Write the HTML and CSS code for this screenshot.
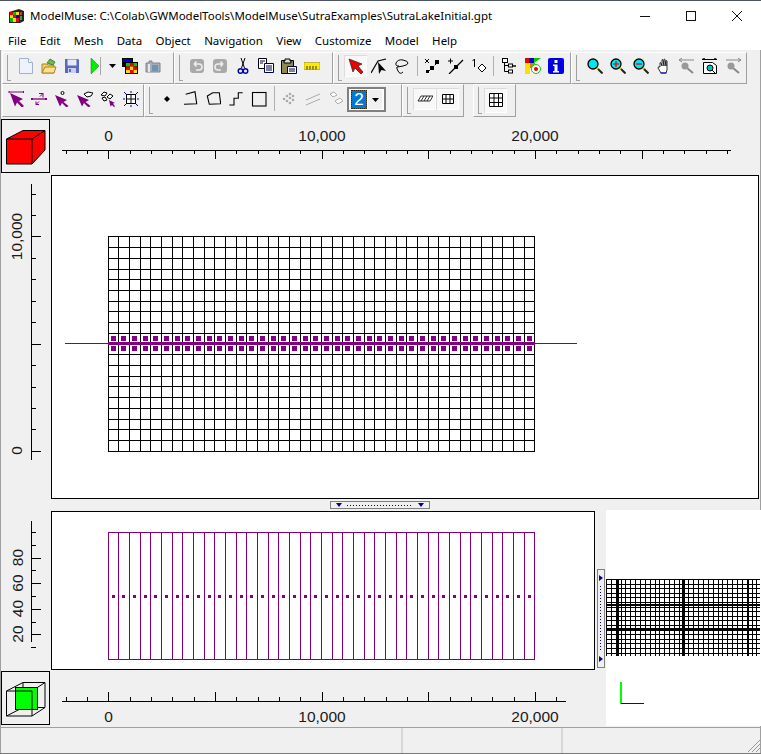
FILE: index.html
```html
<!DOCTYPE html>
<html lang="en">
<head>
  <meta charset="UTF-8">
  <title>ModelMuse</title>
  <link rel="stylesheet" href="styles.css">
</head>
<body>
  <div class="window">
    <div class="titlebar">
      <svg class="app-icon" viewBox="0 0 15 14" width="15" height="14">
        <path d="M0 3l10-3 5 2v10l-4 2H0z" fill="#222"/>
        <rect x="1" y="3" width="3" height="3" fill="#e00"/><rect x="4" y="3" width="3" height="3" fill="#0b0"/><rect x="7" y="3" width="3" height="3" fill="#fd0"/>
        <rect x="1" y="6" width="3" height="3" fill="#fd0"/><rect x="4" y="6" width="3" height="3" fill="#e00"/><rect x="7" y="6" width="3" height="3" fill="#00c"/>
        <rect x="1" y="9" width="3" height="4" fill="#0b0"/><rect x="4" y="9" width="3" height="4" fill="#fd0"/><rect x="7" y="9" width="3" height="4" fill="#e00"/>
        <rect x="11" y="3" width="2" height="3" fill="#c33"/><rect x="11" y="7" width="2" height="4" fill="#3a3"/>
      </svg>
      <span class="title-text">ModelMuse: C:\Colab\GWModelTools\ModelMuse\SutraExamples\SutraLakeInitial.gpt</span>
      <div class="caption-btns">
        <svg width="46" height="30" viewBox="0 0 46 30"><path d="M18 15.500h10" stroke="#111" fill="none"/></svg>
        <svg width="46" height="30" viewBox="0 0 46 30"><rect x="18.500" y="10.500" width="9" height="9" stroke="#111" fill="none"/></svg>
        <svg width="46" height="30" viewBox="0 0 46 30"><path d="M18 10l10 10M28 10l-10 10" stroke="#111" fill="none"/></svg>
      </div>
    </div>

    <div class="menubar">
      <span>File</span><span>Edit</span><span>Mesh</span><span>Data</span><span>Object</span><span>Navigation</span><span>View</span><span>Customize</span><span>Model</span><span>Help</span>
    </div>

    <div class="toolrow">
      <div class="band band-file">
        <button class="tb"><svg viewBox="0 0 16 16"><path d="M1.500.5h9l4 4v11h-13z" fill="#eef3fb" stroke="#9fb2d4"/><path d="M10.500.5v4h4" fill="#fff" stroke="#9fb2d4"/></svg></button>
        <button class="tb"><svg viewBox="0 0 16 16"><path d="M1 15V6h5l1 1h6v8z" fill="#f6cf5f" stroke="#a8842a"/><path d="M1 15l3-6h11l-2 6z" fill="#fbe08a" stroke="#a8842a"/><path d="M6 5l3-4 5 3-2 3z" fill="#6dbb4e" stroke="#3f8a2f"/></svg></button>
        <button class="tb"><svg viewBox="0 0 16 16"><path d="M1 1h13l1 1v13H1z" fill="#5a68c0"/><rect x="3.500" y="1.500" width="9" height="6" fill="#e5e8f5"/><rect x="4" y="10" width="8" height="5" fill="#c9cfe8"/><rect x="5" y="11" width="2" height="3" fill="#5a68c0"/></svg></button>
        <button class="tb"><svg viewBox="0 0 16 16"><path d="M4 0l8 8-8 8z" fill="#00ee00" stroke="#0a8a0a" stroke-width=".5"/></svg></button>
        <i class="tick"></i>
        <button class="tb tb-drop"><svg viewBox="0 0 7 4" class="drop"><path d="M0 0h7L3.500 4z" fill="#000"/></svg></button>
        <button class="tb"><svg viewBox="0 0 16 16"><rect x="0" y="0" width="11" height="9" fill="#000"/><rect x="1" y="1" width="9" height="3" fill="#00c"/><rect x="3" y="4" width="13" height="12" fill="#000"/><rect x="4" y="5" width="4" height="3.500" fill="#0c0"/><rect x="8" y="5" width="3.500" height="3.500" fill="#e00"/><rect x="11.500" y="5" width="3.500" height="3.500" fill="#0c0"/><rect x="4" y="8.500" width="4" height="3.500" fill="#e00"/><rect x="8" y="8.500" width="3.500" height="3.500" fill="#fd0"/><rect x="11.500" y="8.500" width="3.500" height="3.500" fill="#e00"/><rect x="4" y="12" width="4" height="3" fill="#fd0"/><rect x="8" y="12" width="3.500" height="3" fill="#e00"/><rect x="11.500" y="12" width="3.500" height="3" fill="#fd0"/></svg></button>
        <button class="tb"><svg viewBox="0 0 16 16"><path d="M1 5h3V3h3v2h8v9H1z" fill="#a7adb6" stroke="#7e858f"/><rect x="7" y="7" width="6" height="6" fill="#6f93b5"/><rect x="3" y="6" width="2" height="8" fill="#e6e8ea"/></svg></button>
      </div>
      <div class="band band-edit">
        <button class="tb"><svg viewBox="0 0 16 16"><rect x="1" y="1" width="14" height="14" rx="3" fill="#a9a9a9"/><path d="M5 6h5q3 0 3 3t-3 3H7M5 6l2.500-2.500M5 6l2.500 2.500" fill="none" stroke="#eee" stroke-width="1.500"/></svg></button>
        <button class="tb"><svg viewBox="0 0 16 16"><rect x="1" y="1" width="14" height="14" rx="3" fill="#a9a9a9"/><path d="M11 6H6q-3 0-3 3t3 3h3M11 6L8.500 3.500M11 6L8.500 8.500" fill="none" stroke="#eee" stroke-width="1.500"/></svg></button>
        <button class="tb"><svg viewBox="0 0 16 16"><path d="M6 0l3.500 10M10 0L6.500 10" stroke="#000" fill="none"/><circle cx="5.500" cy="13" r="2.300" fill="none" stroke="#00a" stroke-width="1.400"/><circle cx="10.500" cy="13" r="2.300" fill="none" stroke="#00a" stroke-width="1.400"/></svg></button>
        <button class="tb"><svg viewBox="0 0 16 16"><path d="M.5 .5h8v10h-8z" fill="#fff" stroke="#000"/><path d="M6.500 5.500h9v9h-9z" fill="#fff" stroke="#004"/><path d="M2 3h5M2 5h3M8 8h6M8 10h6M8 12h6" stroke="#004"/></svg></button>
        <button class="tb"><svg viewBox="0 0 16 16"><path d="M.5 2.500h12v13H.5z" fill="#8f8a4c" stroke="#000"/><path d="M4 3V1h5v2h1v2H3V3z" fill="#ddd" stroke="#000"/><path d="M6.500 8.500h9v7h-9z" fill="#fff" stroke="#004"/><path d="M8 11h6M8 13h6" stroke="#004"/></svg></button>
        <button class="tb"><svg viewBox="0 0 16 16"><rect x="0" y="4.500" width="16" height="7" fill="#ffea00" stroke="#8a7a00" stroke-width=".5"/><path d="M3 8v3.500M6 8v3.500M9 8v3.500M12 8v3.500" stroke="#333"/></svg></button>
      </div>
      <div class="band band-draw">
        <button class="tb tb-down"><svg viewBox="0 0 16 16"><path d="M1 1l13 5-4 2 5 6-2 2-6-6-2 4z" fill="#e00" stroke="#222" stroke-width=".7"/></svg></button>
        <button class="tb"><svg viewBox="0 0 16 16"><path d="M0 15L7 3l8-2" fill="none" stroke="#000" stroke-width="1.200"/><path d="M7 4l8 9-4.500-1L8 16z"/></svg></button>
        <button class="tb"><svg viewBox="0 0 16 16"><path d="M2 5q2-4 7-3t5 3-5 3-6 1 1 4 5 1M2 5q-1 3 3 3" fill="none" stroke="#000"/></svg></button>
        <i class="sep"></i>
        <button class="tb"><svg viewBox="0 0 16 16"><path d="M0 1l4 4M4 1L0 5" stroke="#000" fill="none"/><path d="M14 3L2 15" stroke="#000" stroke-dasharray="2 2" fill="none"/><rect x="10" y="2" width="4" height="4"/><rect x="5" y="8" width="4" height="4"/><rect x="1" y="12" width="3" height="3"/></svg></button>
        <button class="tb"><svg viewBox="0 0 16 16"><path d="M0 3h5M2.500 .5v5" stroke="#000" fill="none"/><path d="M15 2L1 16" stroke="#000" stroke-width="1.200" fill="none"/><rect x="6" y="7" width="4" height="4"/></svg></button>
        <button class="tb"><svg viewBox="0 0 16 16"><path d="M1.500 3l2-2v8" fill="none" stroke="#000"/><path d="M11 6l4 4-4 4-4-4z" fill="#fff" stroke="#000"/></svg></button>
        <i class="sep sep-narrow"></i>
        <button class="tb"><svg viewBox="0 0 16 16"><path d="M3.500 1.500v12M3.500 7.500h4M3.500 13.500h4" fill="none" stroke="#000"/><rect x="1.500" y=".5" width="5" height="4" fill="#fff" stroke="#000"/><rect x="7.500" y="6" width="4" height="3" fill="#fff" stroke="#000"/><rect x="7.500" y="12" width="4" height="3" fill="#fff" stroke="#000"/><rect x="12" y="7" width="3" height="2" fill="#444"/></svg></button>
        <button class="tb tb-gap"><svg viewBox="0 0 16 16"><rect x="0" y="0" width="4" height="5" fill="#e00"/><rect x="4" y="0" width="5" height="5" fill="#00c"/><path d="M9 0h7l-7 5z" fill="#0c0"/><rect x="0" y="5" width="5" height="5" fill="#fd0"/><rect x="5" y="5" width="5" height="5" fill="#c80"/><rect x="0" y="10" width="5" height="6" fill="#fd0"/><circle cx="11" cy="11" r="4.500" fill="#fff" stroke="#0c0"/><circle cx="11" cy="11" r="2" fill="#e00"/></svg></button>
        <button class="tb"><svg viewBox="0 0 16 16"><rect x="0" y="0" width="16" height="16" rx="2" fill="#0000e0"/><rect x="6.500" y="2" width="3" height="3" fill="#fff"/><path d="M5 6.500h4.500V13H11v1.500H5V13h1.500V8H5z" fill="#fff"/></svg></button>
      </div>
      <div class="band band-zoom">
        <button class="tb"><svg viewBox="0 0 16 16"><path d="M9 9l2 2" stroke="#e8d000" stroke-width="2"/><path d="M11 11l4.500 4.500" stroke="#222" stroke-width="2"/><circle cx="6" cy="6" r="5" fill="#00e8ee" stroke="#000" stroke-width="1.300"/></svg></button>
        <button class="tb"><svg viewBox="0 0 16 16"><path d="M9 9l2 2" stroke="#e8d000" stroke-width="2"/><path d="M11 11l4.500 4.500" stroke="#222" stroke-width="2"/><circle cx="6" cy="6" r="5" fill="#00e8ee" stroke="#000" stroke-width="1.300"/><path d="M3 6h6M6 3v6" stroke="#d00" stroke-width="1.200"/></svg></button>
        <button class="tb"><svg viewBox="0 0 16 16"><path d="M9 9l2 2" stroke="#e8d000" stroke-width="2"/><path d="M11 11l4.500 4.500" stroke="#222" stroke-width="2"/><circle cx="6" cy="6" r="5" fill="#00e8ee" stroke="#000" stroke-width="1.300"/><path d="M3 6h6" stroke="#d00" stroke-width="1.200"/></svg></button>
        <button class="tb"><svg viewBox="0 0 16 16"><path d="M4 9V5q0-1 1 0l1 3V2q0-1 1 0l1 6V1.500q0-1 1 0l1 6.500V3q0-1 1 0v9l-1 3H5L2 10q0-2 2-1z" fill="#fff" stroke="#000" stroke-width=".8"/><path d="M4.500 15h6" stroke="#00c"/></svg></button>
        <button class="tb"><svg viewBox="0 0 16 16"><path d="M0 2h15M0 2l3-2M0 2l3 2" stroke="#888" fill="none"/><path d="M8 10l6 5" stroke="#888" stroke-width="2"/><circle cx="6" cy="8" r="3.500" fill="#999"/></svg></button>
        <button class="tb"><svg viewBox="0 0 16 16"><path d="M0 1.500h15M0 1.500l3-1.500M15 1.500L12 0" stroke="#000" fill="none"/><path d="M1.500 4.500h9l4 3v8h-13z" fill="#fff" stroke="#000"/><circle cx="8" cy="10" r="3" fill="#00c4c8" stroke="#000"/><path d="M10 12l3 3" stroke="#000"/></svg></button>
        <button class="tb"><svg viewBox="0 0 16 16"><path d="M1 2h15M16 2l-3-2M16 2l-3 2" stroke="#888" fill="none"/><path d="M8 10l6 5" stroke="#888" stroke-width="2"/><circle cx="6" cy="8" r="3.500" fill="#999"/></svg></button>
      </div>
    </div>

    <div class="toolrow toolrow-second">
      <div class="band band-mesh">
        <button class="tb"><svg viewBox="0 0 16 16"><path d="M1 0v2M1 1h15M15.500 0v2" stroke="#800080" fill="none"/><path d="M2 2l13 6-4 2 5 5-2 1.500-5-5-2 4z" fill="#800080"/></svg></button>
        <button class="tb"><svg viewBox="0 0 16 16"><path d="M0 8h16" stroke="#800080" stroke-width="1.300" fill="none"/><rect x="0" y="7" width="2" height="2" fill="#800080"/><rect x="14" y="7" width="2" height="2" fill="#800080"/><path d="M8 2.500h4v4M12 2.500l-3 3M8 13.500h-3v-3M5 13.500l3-3" stroke="#800080" fill="none"/></svg></button>
        <button class="tb"><svg viewBox="0 0 16 16"><circle cx="8.500" cy="2" r="1.500" fill="#fff" stroke="#000"/><path d="M1 4l12 5-3.500 2 5 4-2 1.500-4.500-4.500-2 3.500z" fill="#800080"/></svg></button>
        <button class="tb"><svg viewBox="0 0 16 16"><path d="M7 3l4-2 5 1-2 3-4 1z" fill="#fff" stroke="#000"/><path d="M0 4l12 5-3.500 2 5 4-2 1.500-4.500-4.500-2 3.500z" fill="#800080"/></svg></button>
        <button class="tb"><svg viewBox="0 0 16 16"><path d="M1 4l3-3 3 1-2 3zM7 6l3-3 3 2-3 3zM2 7l3-1 2 3-3 1z" fill="#fff" stroke="#000"/><path d="M9 9l6 3-2 .5 2 3-1 .5-2-2-1.500 1.500z" fill="#800080"/></svg></button>
        <button class="tb"><svg viewBox="0 0 16 16"><rect x="3.500" y="3.500" width="9" height="9" fill="#fff" stroke="#000"/><path d="M8 3.500v9M3.500 8h9" stroke="#000"/><path d="M0 8h2M14 8h2M8 0v2M8 14v2M1 1l2 2M15 1l-2 2M1 15l2-2M15 15l-2-2" stroke="#00e" fill="none"/></svg></button>
      </div>
      <div class="band band-shapes">
        <button class="tb"><svg viewBox="0 0 16 16"><path d="M8 5l3 3-3 3-3-3z"/></svg></button>
        <button class="tb"><svg viewBox="0 0 16 16"><path d="M3.700 3.300L13 .7l1.700 12-12.700.6" fill="none" stroke="#000" stroke-width="1.100"/></svg></button>
        <button class="tb"><svg viewBox="0 0 16 16"><path d="M2.300 5l5.400-3.300h6.600l1.400 11-11.400.6z" fill="none" stroke="#000" stroke-width="1.100"/></svg></button>
        <button class="tb"><svg viewBox="0 0 16 16"><path d="M1.300 14H6V7.300h4.300V1.700h4.400" fill="none" stroke="#000" stroke-width="1.100"/></svg></button>
        <button class="tb"><svg viewBox="0 0 16 16"><rect x="1.500" y="1.500" width="13.500" height="13.500" fill="none" stroke="#000" stroke-width="1.100"/></svg></button>
        <i class="sep sep-short"></i>
        <button class="tb"><svg viewBox="0 0 16 16" fill="#aaa"><circle cx="8" cy="3" r="1.300"/><circle cx="11" cy="5" r="1.300"/><circle cx="5" cy="5" r="1.300"/><circle cx="8" cy="7" r="1.300"/><circle cx="2" cy="8" r="1.300"/><circle cx="5" cy="10" r="1.300"/><circle cx="11" cy="9" r="1.300"/><circle cx="8" cy="12" r="1.300"/></svg></button>
        <button class="tb"><svg viewBox="0 0 16 16"><path d="M1 9l14-6M1 14l14-6" stroke="#aaa" fill="none"/></svg></button>
        <button class="tb"><svg viewBox="0 0 16 16"><path d="M2 3l4-2 3 3-4 2zM7 10l5-3 3 3-5 3z" fill="#fff" stroke="#aaa"/></svg></button>
        <div class="combo"><span class="combo-value">2</span><span class="combo-arrow"><svg viewBox="0 0 7 4" width="7" height="4"><path d="M0 0h7L3.500 4z"/></svg></span></div>
      </div>
      <div class="band band-view">
        <button class="tb tb-down tb-flat"><svg viewBox="0 0 16 16"><path d="M4 5h12l-3 5H1zM7 5l-3 5M10 5l-3 5M13 5l-3 5" fill="#fff" stroke="#000" stroke-width=".8"/></svg></button>
        <button class="tb tb-down tb-flat"><svg viewBox="0 0 16 16"><path d="M2.500 3.500h11v9h-11zM2.500 8h11M6 3.500v9M10 3.500v9" fill="#fff" stroke="#000"/></svg></button>
      </div>
      <div class="band band-grid">
        <button class="tb tb-down tb-tall"><svg viewBox="0 0 16 16"><path d="M1.500 1.500h13v13h-13zM1.500 6h13M1.500 10.500h13M6 1.500v13M10.500 1.500v13" fill="#fff" stroke="#000"/></svg></button>
      </div>
    </div>

    <div class="workspace">
      <div class="corner">
        <svg viewBox="0 0 48 54" width="48" height="54"><path d="M5.500 20L22 11.500h22V31L31 45H5.500z" fill="#f00" stroke="#000"/><path d="M5.500 20H31v25M31 20l13-8.500" fill="none" stroke="#000"/></svg>
      </div>
      <svg id="rulerTop" class="ruler" width="709" height="55"></svg>
      <svg id="rulerLeft" class="ruler" width="51" height="324"></svg>
      <svg id="viewTop" class="viewport" width="708" height="324"></svg>
      <div class="split-h"><div class="grip-h"><b class="arrow"></b><span class="dots-h"></span><b class="arrow"></b></div></div>

      <div class="lower">
        <div class="lower-main">
          <svg id="rulerSide" class="ruler" width="51" height="160"></svg>
          <svg id="viewSide" class="viewport" width="544" height="159"></svg>
          <div class="corner">
            <svg viewBox="0 0 48 54" width="48" height="54"><path d="M22 11.500h22v25H22zM5.500 20L22 11.500M31 20l13-8.500M5.500 45L22 36.500M31 45l13-8.500" fill="none" stroke="#000"/><rect x="14.500" y="16.500" width="22" height="22" fill="#0f0" stroke="#000"/><path d="M5.500 20H31v25H5.500z" fill="none" stroke="#000"/></svg>
          </div>
          <svg id="rulerBottom" class="ruler" width="544" height="55"></svg>
        </div>
        <div class="split-v"><div class="grip-v"><b class="arrow arrow-right"></b><span class="dots-v"></span><b class="arrow arrow-right"></b></div></div>
        <svg id="view3d" class="view3d" width="155" height="216"></svg>
      </div>
    </div>

    <div class="statusbar">
      <div class="panel panel-a"></div>
      <div class="panel panel-b"></div>
      <div class="panel panel-c">
        <svg class="sizegrip" width="13" height="13" viewBox="0 0 13 13"><path d="M13 1L1 13M13 5L5 13M13 9L9 13" stroke="#999" fill="none"/></svg>
      </div>
    </div>
  </div>
  <script src="script.js"></script>
</body>
</html>
```

FILE: styles.css
```css
* {
  box-sizing: border-box;
}
html, body {
  margin: 0;
  height: 100%;
}
body {
  font-family: "Liberation Sans", Arial, sans-serif;
  background-color: #f0f0f0;
  overflow: hidden;
}
.window {
  width: 761px;
  height: 754px;
  display: flex;
  flex-direction: column;
  background-color: #f0f0f0;
  border-top: 1px solid #4a5560;
  box-shadow: inset 1px 0 #a0a0a0, inset -1px 0 #a0a0a0;
}
.titlebar {
  height: 29px;
  background: #fff;
  display: flex;
  align-items: center;
  padding-left: 9px;
  font-family: "Noto Sans", sans-serif;
  font-size: 11.500px;
  color: #000;
}
.app-icon {
  margin-right: 6px;
}
.caption-btns {
  margin-left: auto;
  margin-right: 1px;
  display: flex;
}
.caption-btns svg {
  display: block;
}
.menubar {
  height: 20px;
  background: #fff;
  display: flex;
  align-items: center;
  padding-left: 8px;
  gap: 13.400px;
  font-family: "Noto Sans", sans-serif;
  font-size: 11.500px;
  color: #000;
}

/* toolbars */
.toolrow {
  height: 32px;
  margin-top: 2px;
  padding-left: 2px;
  display: flex;
}
.toolrow-second {
  height: 33px;
  margin-top: 0;
}
.band {
  height: 100%;
  display: flex;
  align-items: center;
  padding: 0 0 4px 10px;
  border-right: 1px solid #a0a0a0;
  border-bottom: 1px solid #a0a0a0;
  border-top: 1px solid #fff;
  border-left: 1px solid #fff;
  position: relative;
}
.band::before {
  content: "";
  position: absolute;
  left: 4px;
  top: 2px;
  bottom: 2px;
  width: 3px;
  border-left: 1px solid #a0a0a0;
  border-bottom: 1px solid #a0a0a0;
}
.band-file { width: 172px; padding-left: 11px; }
.band-edit { width: 159px; }
.band-draw { width: 238px; }
.band-zoom { width: 176px; padding-left: 11px; }
.band-mesh { width: 142px; padding-left: 1px; }
.band-mesh::before { display: none; }
.band-shapes { width: 258px; }
.band-view { width: 62px; }
.band-grid { width: 43px; margin-left: 9px; }
.tb {
  width: 23px;
  height: 22px;
  padding: 0;
  border: 0;
  background: none;
  display: flex;
  align-items: center;
  justify-content: center;
  flex: none;
}
.tb svg {
  width: 16px;
  height: 16px;
  display: block;
}
.tb .drop {
  width: 7px;
  height: 4px;
}
.tb-drop {
  margin-right: -6px;
}
.tb-gap {
  margin-left: 1px;
}
.tb-down {
  background: #f8f8f8;
  box-shadow: inset 1px 1px 0 #dcdcdc, inset -1px -1px 0 #fff;
}
.tb-tall {
  height: 25px;
  margin-top: 3px;
}
.tick {
  width: 1px;
  height: 18px;
  background: #a8a8a8;
  margin: 0 0 0 -6px;
  flex: none;
}
.sep {
  flex: none;
  width: 1px;
  height: 20px;
  background: #b0b0b0;
  margin: 0 3.500px;
}
.sep-narrow {
  margin: 0 3px;
}
.sep-short {
  height: 25px;
  margin: 0 3.500px;
}
.combo {
  width: 39px;
  height: 25px;
  margin: 2px 0 0 0;
  padding: 1px 2px;
  border: 2px solid #808080;
  background: #fff;
  display: flex;
  align-items: stretch;
  flex: none;
}
.combo-value {
  width: 16px;
  background: #0078d7;
  color: #fff;
  border: 1px dotted #3a2a10;
  font-family: "Liberation Sans", sans-serif;
  font-size: 17px;
  line-height: 17px;
  text-align: center;
}
.combo-arrow {
  flex: 1;
  margin-left: 1px;
  background: #f0f0f0;
  display: flex;
  align-items: center;
  justify-content: center;
}

/* main area */
.workspace {
  flex: 1;
  display: grid;
  grid-template-columns: 51px 1fr;
  grid-template-rows: 56px 324px 12px 1fr;
  padding-top: 2px;
}
.corner {
  width: 49px;
  height: 54px;
  margin-left: 1px;
  border: 1px solid #000;
}
.corner svg {
  display: block;
  margin: -1px;
}
.ruler {
  display: block;
}
.ruler text {
  font-family: "Liberation Sans", Arial, sans-serif;
  font-size: 15.500px;
  fill: #1a1a1a;
}
.viewport {
  display: block;
  background: #fff;
}
.split-h {
  grid-column: 1 / -1;
  display: flex;
  justify-content: center;
  align-items: center;
  padding-right: 1px;
}
.grip-h {
  width: 100px;
  height: 8px;
  border: 1px solid #808080;
  display: flex;
  align-items: center;
  justify-content: space-between;
  padding: 0 5px;
}
.dots-h {
  flex: 1;
  margin: 0 5px;
  height: 1px;
  background: repeating-linear-gradient(90deg, #00008b 0 1px, transparent 1px 3px);
}
.dots-v {
  flex: 1;
  margin: 5px 0;
  width: 1px;
  background: repeating-linear-gradient(180deg, #00008b 0 1px, transparent 1px 3px);
}
.arrow {
  width: 0;
  height: 0;
  border-left: 3px solid transparent;
  border-right: 3px solid transparent;
  border-top: 4px solid #00008b;
}
.arrow-right {
  border-top: 3px solid transparent;
  border-bottom: 3px solid transparent;
  border-left: 4px solid #00008b;
  border-right: 0;
}
.lower {
  grid-column: 1 / -1;
  display: flex;
  align-items: flex-start;
}
.lower-main {
  width: 595px;
  display: grid;
  grid-template-columns: 51px 544px;
  grid-template-rows: 160px 55px;
}
.split-v {
  width: 11px;
  height: 215px;
  padding-bottom: 1px;
  display: flex;
  align-items: center;
  justify-content: center;
}
.grip-v {
  width: 8px;
  height: 99px;
  border: 1px solid #808080;
  display: flex;
  flex-direction: column;
  align-items: center;
  justify-content: space-between;
  padding: 5px 0;
}
.view3d {
  display: block;
  background: #fff;
  margin-top: -1px;
}

/* status bar */
.statusbar {
  height: 27px;
  display: flex;
  border-top: 1px solid #a0a0a0;
  border-bottom: 1px solid #777;
}
.panel {
  height: 100%;
  border-right: 2px solid #d8d8d8;
}
.panel-a { width: 403px; }
.panel-b { width: 160px; }
.panel-c {
  flex: 1;
  border-right: 0;
  position: relative;
}
.sizegrip {
  position: absolute;
  right: 1px;
  bottom: 1px;
}
```

FILE: script.js
```js
const NS = 'http://www.w3.org/2000/svg';

function add(svg, tag, attrs, text) {
  const el = document.createElementNS(NS, tag);
  for (const key in attrs) el.setAttribute(key, attrs[key]);
  if (text) el.textContent = text;
  svg.appendChild(el);
  return el;
}

function line(svg, x1, y1, x2, y2, color, width) {
  add(svg, 'line', {
    x1, y1, x2, y2,
    stroke: color || '#000',
    'stroke-width': width || 1,
    'shape-rendering': 'crispEdges'
  });
}

// screen position of a mesh line
const colX = i => Math.floor(108.01 + i * 10.67) + 0.5;
const rowY = i => Math.round(236.4 + i * 10.72) + 0.5;
const PURPLE = '#800080';

// x rulers, one tick per 1000 units. svg starts at x=51
function xRuler(id, lineY, dir, labelY, x2, lastTick) {
  const svg = document.getElementById(id);
  line(svg, 11, lineY + 0.5, x2, lineY + 0.5);
  for (let n = -2; n <= lastTick; n++) {
    const x = Math.round(57.3 + n * 21.33) + 0.5;
    line(svg, x, lineY, x, lineY + dir * (n % 5 === 0 ? 9 : 4));
  }
  [['0', 57.5], ['10,000', 271], ['20,000', 484]].forEach(([t, x]) => {
    add(svg, 'text', { x, y: labelY, 'text-anchor': 'middle' }, t);
  });
}
xRuler('rulerTop', 31, 1, 22, 680, 29);
xRuler('rulerBottom', 30, -1, 51, 515, 21);

// y rulers
function yLabel(svg, t, x, y) {
  add(svg, 'text', { x: 0, y: 0, 'text-anchor': 'middle', transform: `translate(${x} ${y}) rotate(-90)` }, t);
}

const rulerLeft = document.getElementById('rulerLeft');
line(rulerLeft, 31.5, 9, 31.5, 285);
for (let n = 0; n <= 12; n++) {
  const y = Math.round(275.9 - n * 21.45) + 0.5;
  line(rulerLeft, 31, y, 31 + (n % 5 === 0 ? 10 : 5), y);
}
yLabel(rulerLeft, '0', 22, 275.5);
yLabel(rulerLeft, '10,000', 22, 61.5);

const rulerSide = document.getElementById('rulerSide');
line(rulerSide, 31.5, 10, 31.5, 131);
for (let n = 1; n <= 10; n++) {
  const y = Math.round(149 - n * 12.8) + 0.5;
  line(rulerSide, 31, y, 31 + (n % 2 === 0 && n < 10 ? 10 : 5), y);
}
yLabel(rulerSide, '20', 23, 123);
yLabel(rulerSide, '40', 23, 97.5);
yLabel(rulerSide, '60', 23, 72);
yLabel(rulerSide, '80', 23, 46.5);

// top view, origin at 51,175
const viewTop = document.getElementById('viewTop');
add(viewTop, 'rect', { x: 0.5, y: 0.5, width: 707, height: 323, fill: 'none', stroke: '#000' });
for (let i = 0; i <= 40; i++) line(viewTop, colX(i) - 51, 61, colX(i) - 51, 276.5);
for (let i = 0; i <= 20; i++) line(viewTop, 57, rowY(i) - 175, 484, rowY(i) - 175);
for (let i = 0; i < 40; i++) {
  const x = Math.floor(colX(i) + 2.5) - 51;
  [161, 171].forEach(y => add(viewTop, 'rect', { x, y, width: 5, height: 5, fill: PURPLE }));
}
add(viewTop, 'rect', { x: 57, y: 167, width: 427, height: 3, fill: PURPLE });
line(viewTop, 14, 168.5, 526, 168.5, PURPLE);

// side view, origin at 51,511
const viewSide = document.getElementById('viewSide');
add(viewSide, 'rect', { x: 0.5, y: 0.5, width: 543, height: 158, fill: 'none', stroke: '#000' });
for (let i = 0; i <= 40; i++) line(viewSide, colX(i) - 51, 21, colX(i) - 51, 149, PURPLE);
line(viewSide, 57, 21.5, 484, 21.5, PURPLE);
line(viewSide, 57, 148.5, 484, 148.5, PURPLE);
for (let i = 0; i < 40; i++) {
  add(viewSide, 'rect', { x: Math.floor(colX(i) + 3.5) - 51, y: 84, width: 3, height: 3, fill: PURPLE });
}

// 3D overview, origin at 606,510
const view3d = document.getElementById('view3d');
const gridTop = 69, gridBottom = 146;
for (let i = 0; i * 4.85 <= 154; i++) {
  const x = Math.round(i * 4.85) + 0.5;
  line(view3d, x, gridTop, x, gridBottom);
}
for (let i = 0; i * 4.6 <= 76; i++) {
  const y = gridTop + Math.round(i * 4.6) + 0.5;
  line(view3d, 0, y, 154, y);
}
[12, 77, 142].forEach(x => line(view3d, x, gridTop, x, gridBottom, '#000', 2));
[26, 50].forEach(y => line(view3d, 0, gridTop + y, 154, gridTop + y, '#000', 2));
line(view3d, 15, 172, 15, 194, '#00ff00', 2);
line(view3d, 15, 193.5, 38, 193.5, '#0000e0');
```
